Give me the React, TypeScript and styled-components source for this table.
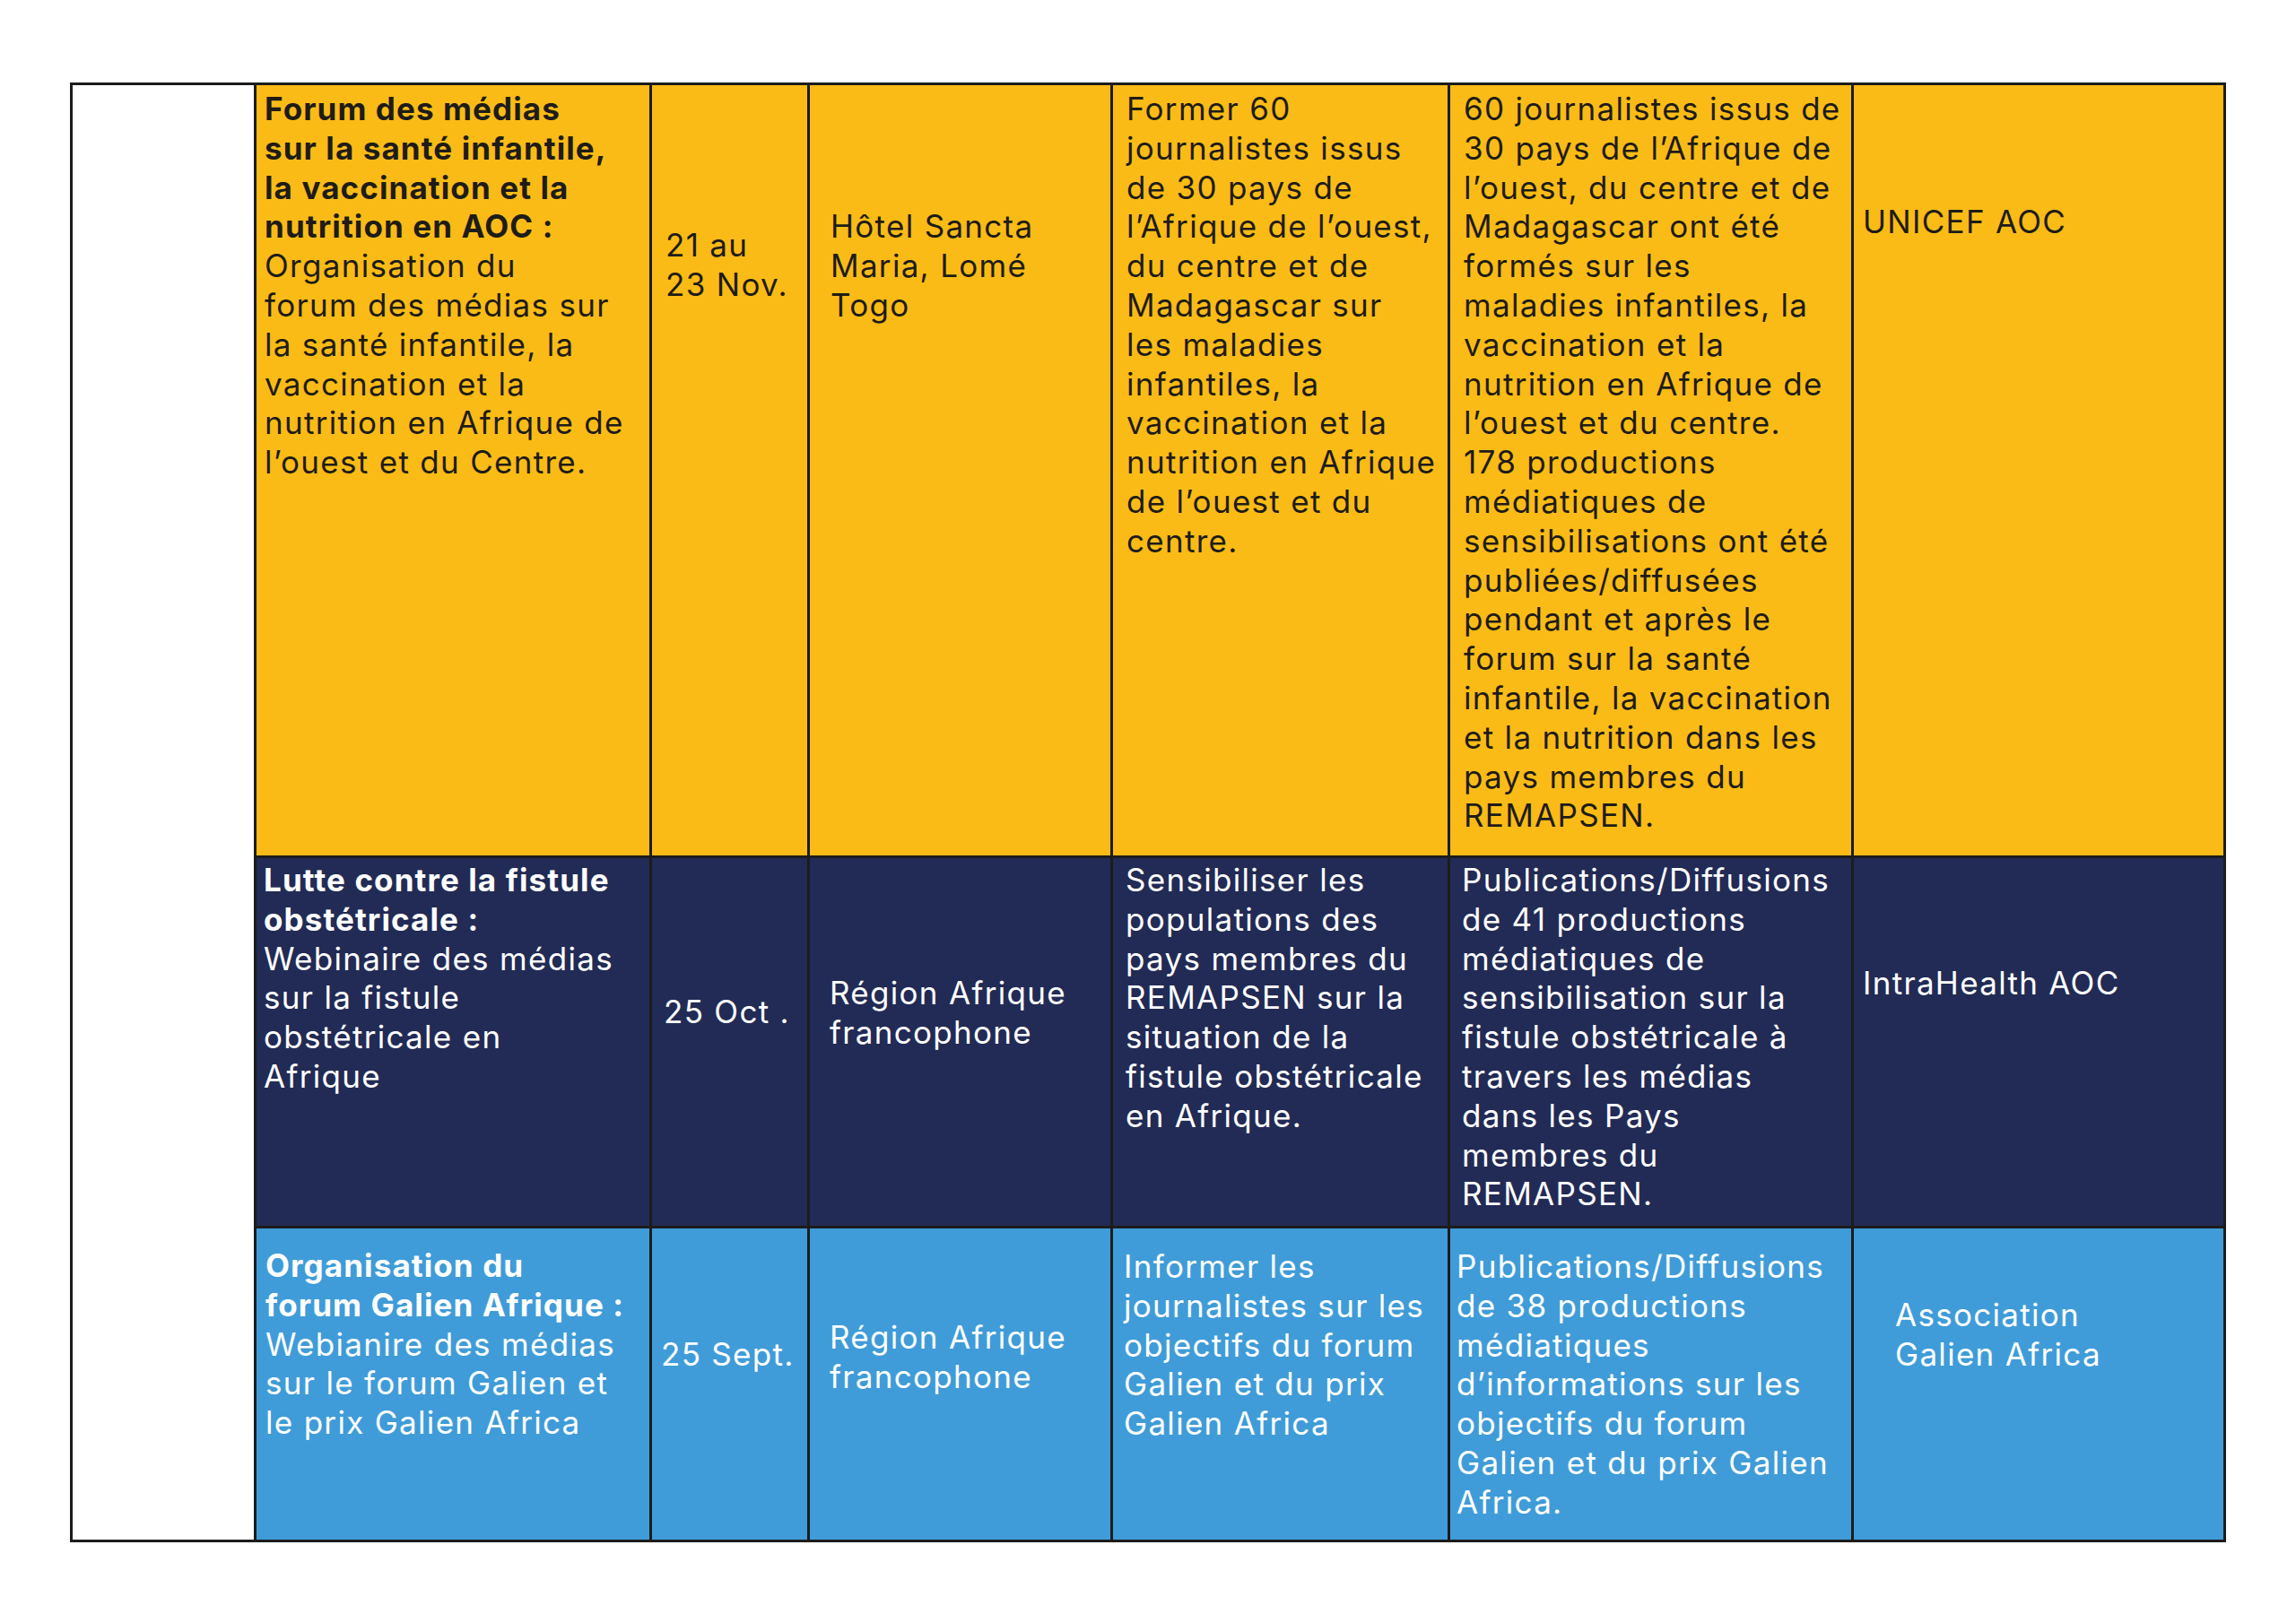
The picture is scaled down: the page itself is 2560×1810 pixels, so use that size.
import React from "react";
import styled, { createGlobalStyle } from "styled-components";

const Global = createGlobalStyle`
  html, body { margin: 0; padding: 0; background: #ffffff; }
  body { font-family: Inter, "Noto Sans", "Liberation Sans", sans-serif; }
`;

type Tone = "yellow" | "navy" | "blue";

const toneBg: Record<Tone, string> = {
  yellow: "#FABB16",
  navy: "#222B55",
  blue: "#3F9CD8",
};
const toneFg: Record<Tone, string> = {
  yellow: "#1E1C19",
  navy: "#FFFFFF",
  blue: "#FFFFFF",
};

const Page = styled.div`
  width: 2560px;
  height: 1810px;
  box-sizing: border-box;
  padding: 92px 0 0 78px;
  background: #ffffff;
`;

const Table = styled.div`
  display: grid;
  grid-template-columns: 205px 441px 176px 338px 376px 450px 415px;
  grid-template-rows: 862px 413px 350px;
  width: max-content;
  border-top: 3px solid #1c1c1c;
  border-left: 3px solid #1c1c1c;
`;

const BlankCell = styled.div`
  grid-row: 1 / span 3;
  background: #ffffff;
  border-right: 3px solid #1c1c1c;
  border-bottom: 3px solid #1c1c1c;
`;

const Cell = styled.div<{ $tone: Tone; $pt: number; $pl: number }>`
  box-sizing: border-box;
  background: ${(p) => toneBg[p.$tone]};
  color: ${(p) => toneFg[p.$tone]};
  border-right: 3px solid #1c1c1c;
  border-bottom: 3px solid #1c1c1c;
  padding-top: ${(p) => p.$pt}px;
  padding-left: ${(p) => p.$pl}px;
  font-size: 35px;
  line-height: 43.8px;
  font-weight: 400;
  letter-spacing: 1.3px;
  overflow: hidden;
`;

const Line = styled.span<{ $bold?: boolean }>`
  display: block;
  white-space: nowrap;
  font-weight: ${(p) => (p.$bold ? 700 : 400)};
  letter-spacing: ${(p) => (p.$bold ? "1.1px" : "inherit")};
`;

type CellData = { pt: number; pl: number; bold?: string[]; lines: string[] };
type RowData = { tone: Tone; cells: CellData[] };

const rows: RowData[] = [
  {
    tone: "yellow",
    cells: [
      {
        pt: 5,
        pl: 9,
        bold: [
          "Forum des médias",
          "sur la santé infantile,",
          "la vaccination et la",
          "nutrition en AOC :",
        ],
        lines: [
          "Organisation du",
          "forum des médias sur",
          "la santé infantile, la",
          "vaccination et la",
          "nutrition en Afrique de",
          "l’ouest et du Centre.",
        ],
      },
      { pt: 157, pl: 15, lines: ["21 au", "23 Nov."] },
      { pt: 136, pl: 23, lines: ["Hôtel Sancta", "Maria, Lomé", "Togo"] },
      {
        pt: 5,
        pl: 15,
        lines: [
          "Former 60",
          "journalistes issus",
          "de 30 pays de",
          "l’Afrique de l’ouest,",
          "du centre et de",
          "Madagascar sur",
          "les maladies",
          "infantiles, la",
          "vaccination et la",
          "nutrition en Afrique",
          "de l’ouest et du",
          "centre.",
        ],
      },
      {
        pt: 5,
        pl: 15,
        lines: [
          "60 journalistes issus de",
          "30 pays de l’Afrique de",
          "l’ouest, du centre et de",
          "Madagascar ont été",
          "formés sur les",
          "maladies infantiles, la",
          "vaccination et la",
          "nutrition en Afrique de",
          "l’ouest et du centre.",
          "178 productions",
          "médiatiques de",
          "sensibilisations ont été",
          "publiées/diffusées",
          "pendant et après le",
          "forum sur la santé",
          "infantile, la vaccination",
          "et la nutrition dans les",
          "pays membres du",
          "REMAPSEN.",
        ],
      },
      { pt: 131, pl: 10, lines: ["UNICEF AOC"] },
    ],
  },
  {
    tone: "navy",
    cells: [
      {
        pt: 3,
        pl: 8,
        bold: ["Lutte contre la fistule", "obstétricale :"],
        lines: [
          "Webinaire des médias",
          "sur la fistule",
          "obstétricale en",
          "Afrique",
        ],
      },
      { pt: 150, pl: 13, lines: ["25 Oct ."] },
      { pt: 129, pl: 22, lines: ["Région Afrique", "francophone"] },
      {
        pt: 3,
        pl: 14,
        lines: [
          "Sensibiliser les",
          "populations des",
          "pays membres du",
          "REMAPSEN sur la",
          "situation de la",
          "fistule obstétricale",
          "en Afrique.",
        ],
      },
      {
        pt: 3,
        pl: 13,
        lines: [
          "Publications/Diffusions",
          "de 41 productions",
          "médiatiques de",
          "sensibilisation sur la",
          "fistule obstétricale à",
          "travers les médias",
          "dans les Pays",
          "membres du",
          "REMAPSEN.",
        ],
      },
      { pt: 118, pl: 10, lines: ["IntraHealth AOC"] },
    ],
  },
  {
    tone: "blue",
    cells: [
      {
        pt: 20,
        pl: 10,
        bold: ["Organisation du", "forum Galien Afrique :"],
        lines: [
          "Webianire des médias",
          "sur le forum Galien et",
          "le prix Galien Africa",
        ],
      },
      { pt: 119, pl: 10, lines: ["25 Sept."] },
      { pt: 100, pl: 22, lines: ["Région Afrique", "francophone"] },
      {
        pt: 21,
        pl: 12,
        lines: [
          "Informer les",
          "journalistes sur les",
          "objectifs du forum",
          "Galien et du prix",
          "Galien Africa",
        ],
      },
      {
        pt: 21,
        pl: 7,
        lines: [
          "Publications/Diffusions",
          "de 38 productions",
          "médiatiques",
          "d’informations sur les",
          "objectifs du forum",
          "Galien et du prix Galien",
          "Africa.",
        ],
      },
      { pt: 75, pl: 46, lines: ["Association", "Galien Africa"] },
    ],
  },
];

export default function App() {
  return (
    <>
      <Global />
      <Page>
        <Table>
          <BlankCell />
          {rows.map((row, ri) =>
            row.cells.map((cell, ci) => (
              <Cell key={`${ri}-${ci}`} $tone={row.tone} $pt={cell.pt} $pl={cell.pl}>
                {(cell.bold ?? []).map((t, i) => (
                  <Line key={`b${i}`} $bold>
                    {t}
                  </Line>
                ))}
                {cell.lines.map((t, i) => (
                  <Line key={`l${i}`}>{t}</Line>
                ))}
              </Cell>
            ))
          )}
        </Table>
      </Page>
    </>
  );
}
